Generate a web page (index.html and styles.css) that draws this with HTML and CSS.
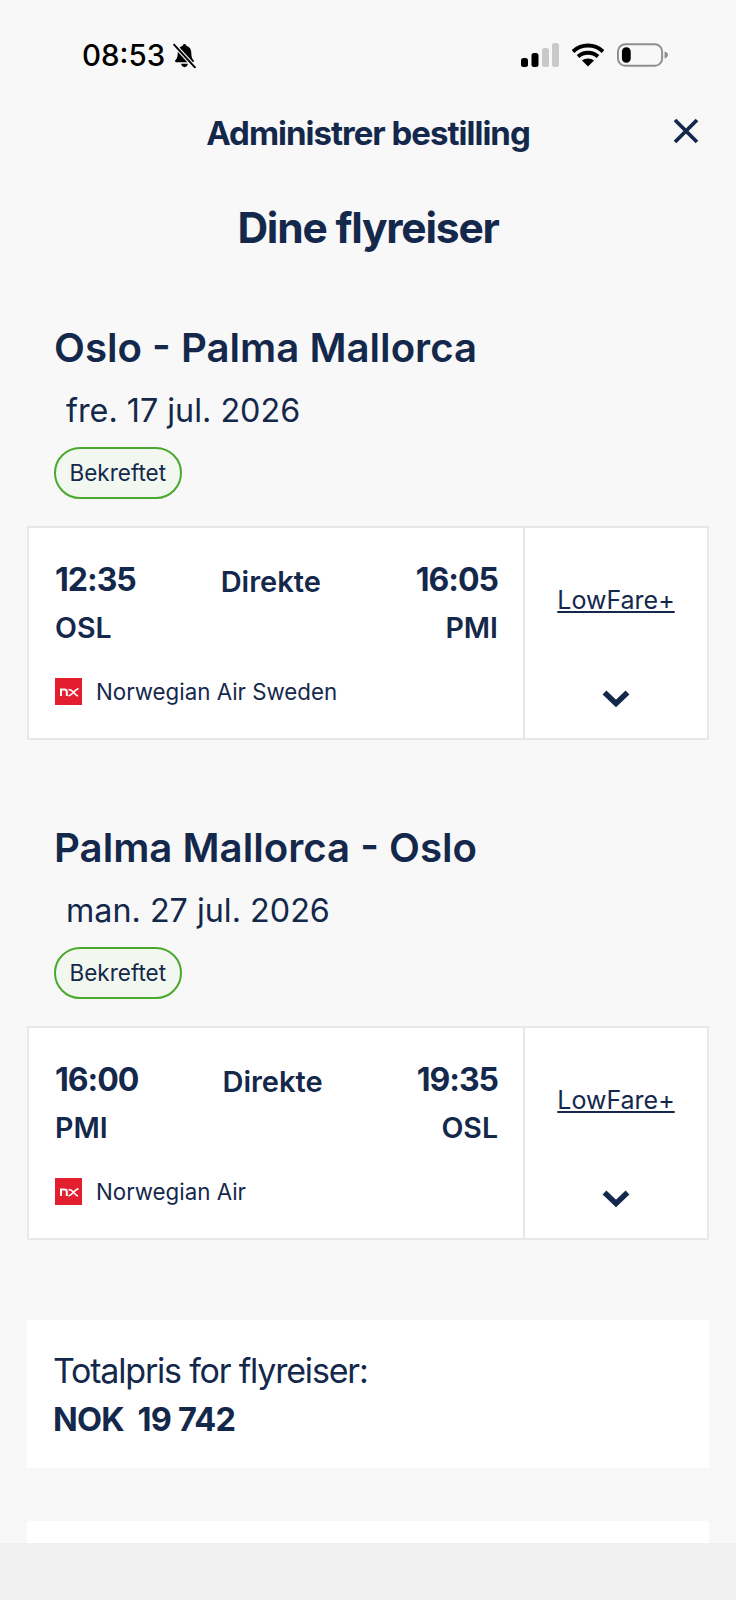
FILE: index.html
```html
<!DOCTYPE html>
<html lang="en">
  <head>
    <meta charset="UTF-8" />
    <meta name="viewport" content="width=device-width, initial-scale=1.0" />
    <title>Administrer bestilling</title>
    <link rel="stylesheet" href="styles.css">
  </head>
  <body>
    <div class="status-bar">
      <div class="status-left">
        <span class="clock">08:53</span>
        <svg class="bell" viewBox="0 0 24 24" width="25" height="25">
          <path d="M12 1c-1 0-1.700.7-1.800 1.700C7.400 3.500 5.600 5.800 5.500 9c-.1 3.800-.6 5.800-2.300 7.600-.6.700-.2 1.900.8 1.900h16c1 0 1.400-1.200.8-1.900-1.700-1.800-2.200-3.800-2.300-7.600-.1-3.200-1.900-5.500-4.700-6.300C13.700 1.700 13 1 12 1z" fill="#000"/>
          <path d="M8.800 20h6.400c0 1.800-1.400 3.200-3.200 3.200S8.800 21.800 8.800 20z" fill="#000"/>
          <path d="M1.500 1l21 23" stroke="#f8f8f8" stroke-width="4"/>
          <path d="M1.500 1l21 23" stroke="#000" stroke-width="1.800"/>
        </svg>
      </div>
      <div class="status-right">
        <svg viewBox="0 0 38 24" width="38" height="24">
          <rect x="0" y="15" width="7" height="9" rx="2.500" fill="#000"/>
          <rect x="10.500" y="10" width="7" height="14" rx="2.500" fill="#000"/>
          <rect x="21" y="5" width="7" height="19" rx="2.500" fill="#c9c9c9"/>
          <rect x="31" y="0" width="7" height="24" rx="2.500" fill="#c9c9c9"/>
        </svg>
        <svg class="wifi" viewBox="0 0 32 24" width="32" height="24">
          <path d="M16 2.500C10 2.500 5 4.800 1 8.500" fill="none" stroke="#000" stroke-width="4"/>
          <path d="M16 2.500c6 0 11 2.300 15 6" fill="none" stroke="#000" stroke-width="4"/>
          <path d="M6 13.500c2.700-2.400 6-3.800 10-3.800s7.300 1.400 10 3.800" fill="none" stroke="#000" stroke-width="4"/>
          <path d="M16 23.500l-6-6c1.600-1.300 3.600-2 6-2s4.400.7 6 2z" fill="#000"/>
        </svg>
        <svg class="battery" viewBox="0 0 52 24" width="51" height="24">
          <rect x="1" y="1" width="45" height="22" rx="7.500" fill="none" stroke="#8e8e8e" stroke-width="2"/>
          <rect x="5" y="4" width="9" height="16" rx="4.500" fill="#000"/>
          <path d="M48.500 8.500c2 .5 3.500 2 3.500 3.500s-1.500 3-3.500 3.500z" fill="#8e8e8e"/>
        </svg>
      </div>
    </div>

    <header class="top-bar">
      <h2>Administrer bestilling</h2>
      <button class="close-btn" aria-label="Lukk">
        <svg viewBox="0 0 26 26" width="26" height="26">
          <path d="M2 2l22 22M24 2L2 24" stroke="#14284b" stroke-width="3.800" fill="none"/>
        </svg>
      </button>
    </header>

    <h1 class="page-title">Dine flyreiser</h1>

    <section class="journey">
      <h3>Oslo - Palma Mallorca</h3>
      <p class="journey-date">fre. 17 jul. 2026</p>
      <span class="badge">Bekreftet</span>
      <div class="flight-card">
        <div class="flight-main">
          <div class="flight-times">
            <div class="time">12:35</div>
            <div class="stops">Direkte</div>
            <div class="time">16:05</div>
          </div>
          <div class="flight-airports">
            <span>OSL</span>
            <span>PMI</span>
          </div>
          <div class="carrier">
            <svg class="carrier-logo" viewBox="0 0 27 27" width="27" height="27">
              <rect width="27" height="27" fill="#e31f2f"/>
              <path d="M6 18v-6.500h3.500c1.500 0 2.300.8 2.300 2.300V18" fill="none" stroke="#fff" stroke-width="2"/>
              <path d="M13.500 11.500c3 0 4.500 2 5.500 3.200s2 2.800 4 3.300M23.500 10.500c-2.500 1-4 2.500-5 3.800s-2.500 3-5 3.700" fill="none" stroke="#fff" stroke-width="1.600"/>
            </svg>
            <span>Norwegian Air Sweden</span>
          </div>
        </div>
        <div class="flight-fare">
          <a href="#">LowFare+</a>
          <svg viewBox="0 0 28 20" width="28" height="20">
            <path d="M2.500 3.500L14 14.500 25.500 3.500" fill="none" stroke="#14284b" stroke-width="5.500"/>
          </svg>
        </div>
      </div>
    </section>

    <section class="journey">
      <h3>Palma Mallorca - Oslo</h3>
      <p class="journey-date">man. 27 jul. 2026</p>
      <span class="badge">Bekreftet</span>
      <div class="flight-card">
        <div class="flight-main">
          <div class="flight-times">
            <div class="time">16:00</div>
            <div class="stops">Direkte</div>
            <div class="time">19:35</div>
          </div>
          <div class="flight-airports">
            <span>PMI</span>
            <span>OSL</span>
          </div>
          <div class="carrier">
            <svg class="carrier-logo" viewBox="0 0 27 27" width="27" height="27">
              <rect width="27" height="27" fill="#e31f2f"/>
              <path d="M6 18v-6.500h3.500c1.500 0 2.300.8 2.300 2.300V18" fill="none" stroke="#fff" stroke-width="2"/>
              <path d="M13.500 11.500c3 0 4.500 2 5.500 3.200s2 2.800 4 3.300M23.500 10.500c-2.500 1-4 2.500-5 3.800s-2.500 3-5 3.700" fill="none" stroke="#fff" stroke-width="1.600"/>
            </svg>
            <span>Norwegian Air</span>
          </div>
        </div>
        <div class="flight-fare">
          <a href="#">LowFare+</a>
          <svg viewBox="0 0 28 20" width="28" height="20">
            <path d="M2.500 3.500L14 14.500 25.500 3.500" fill="none" stroke="#14284b" stroke-width="5.500"/>
          </svg>
        </div>
      </div>
    </section>

    <section class="total-card">
      <div class="total-label">Totalpris for flyreiser:</div>
      <div class="total-price">NOK&nbsp; 19 742</div>
    </section>

    <div class="next-card"></div>

    <div class="bottom-bar"></div>
  </body>
</html>
```

FILE: styles.css
```css
html,
body {
  height: 1600px;
  overflow: hidden;
}

body {
  font-family: Inter, "Noto Sans", sans-serif;
  margin: 0;
  padding: 0;
  background-color: #f8f8f8;
  color: #14284b;
  position: relative;
}

.status-bar {
  display: flex;
  justify-content: space-between;
  align-items: center;
  height: 24px;
  padding: 43px 68px 0 82px;
}

.status-left {
  display: flex;
  align-items: center;
  gap: 7px;
}

.clock {
  font-size: 29.500px;
  font-weight: 500;
  color: #000;
}

.status-right {
  display: flex;
  align-items: center;
  gap: 13px;
}

.top-bar {
  display: flex;
  justify-content: center;
  align-items: center;
  position: relative;
  height: 40px;
  margin-top: 46px;
}

.top-bar h2 {
  font-size: 33px;
  font-weight: 700;
  letter-spacing: -1px;
  margin: 0;
}

.close-btn {
  position: absolute;
  right: 37px;
  top: 5px;
  padding: 0;
  border: none;
  background: none;
}

.page-title {
  font-size: 42.500px;
  font-weight: 700;
  letter-spacing: -1.200px;
  text-align: center;
  margin: 50px 0 0 0;
  line-height: 50px;
}

.journey {
  margin: 0 27px;
}

.page-title + .journey {
  margin-top: 70px;
}

.journey + .journey {
  margin-top: 83px;
}

.journey h3 {
  font-size: 40.200px;
  font-weight: 600;
  line-height: 50px;
  margin: 0 0 0 27px;
}

.journey-date {
  font-size: 32.300px;
  line-height: 40px;
  margin: 18px 0 0 39px;
}

.badge {
  display: inline-block;
  box-sizing: border-box;
  height: 52px;
  line-height: 48px;
  padding: 0 13.500px;
  margin: 16px 0 0 27px;
  font-size: 22.500px;
  background-color: #f2f8f0;
  border: 2px solid #4aa82d;
  border-radius: 26px;
}

.flight-card {
  display: flex;
  height: 214px;
  box-sizing: border-box;
  margin-top: 27px;
  background-color: #fff;
  border: 2px solid #e8e8e8;
}

.flight-main {
  flex: 1;
  padding: 30px 25px 0 26px;
}

.flight-times {
  display: flex;
  justify-content: space-between;
  align-items: center;
  height: 42px;
}

.time {
  font-size: 32px;
  font-weight: 700;
  letter-spacing: -1px;
}

.stops {
  font-size: 29px;
  font-weight: 600;
  margin: 5px 10px 0 0;
}

.flight-airports {
  display: flex;
  justify-content: space-between;
  font-size: 28.500px;
  font-weight: 600;
  line-height: 36px;
  margin-top: 10px;
}

.carrier {
  display: flex;
  align-items: center;
  gap: 14px;
  margin-top: 32px;
  font-size: 22.300px;
}

.flight-fare {
  display: flex;
  flex-direction: column;
  align-items: center;
  box-sizing: border-box;
  width: 184px;
  border-left: 2px solid #e8e8e8;
  padding-top: 57px;
}

.flight-fare a {
  font-size: 25px;
  color: #14284b;
}

.flight-fare svg {
  margin-top: 74px;
}

.total-card {
  margin: 80px 27px 0 27px;
  height: 148px;
  box-sizing: border-box;
  padding: 30px 26px 0 26px;
  background-color: #fff;
}

.total-label {
  font-size: 34px;
  letter-spacing: -1.200px;
  line-height: 42px;
}

.total-price {
  font-size: 32.500px;
  font-weight: 700;
  letter-spacing: -0.800px;
  line-height: 46px;
  margin-top: 5px;
}

.next-card {
  margin: 53px 27px 0 27px;
  height: 80px;
  background-color: #fff;
}

.bottom-bar {
  position: absolute;
  left: 0;
  right: 0;
  bottom: 0;
  height: 57px;
  background-color: #f0f0f0;
}
```
